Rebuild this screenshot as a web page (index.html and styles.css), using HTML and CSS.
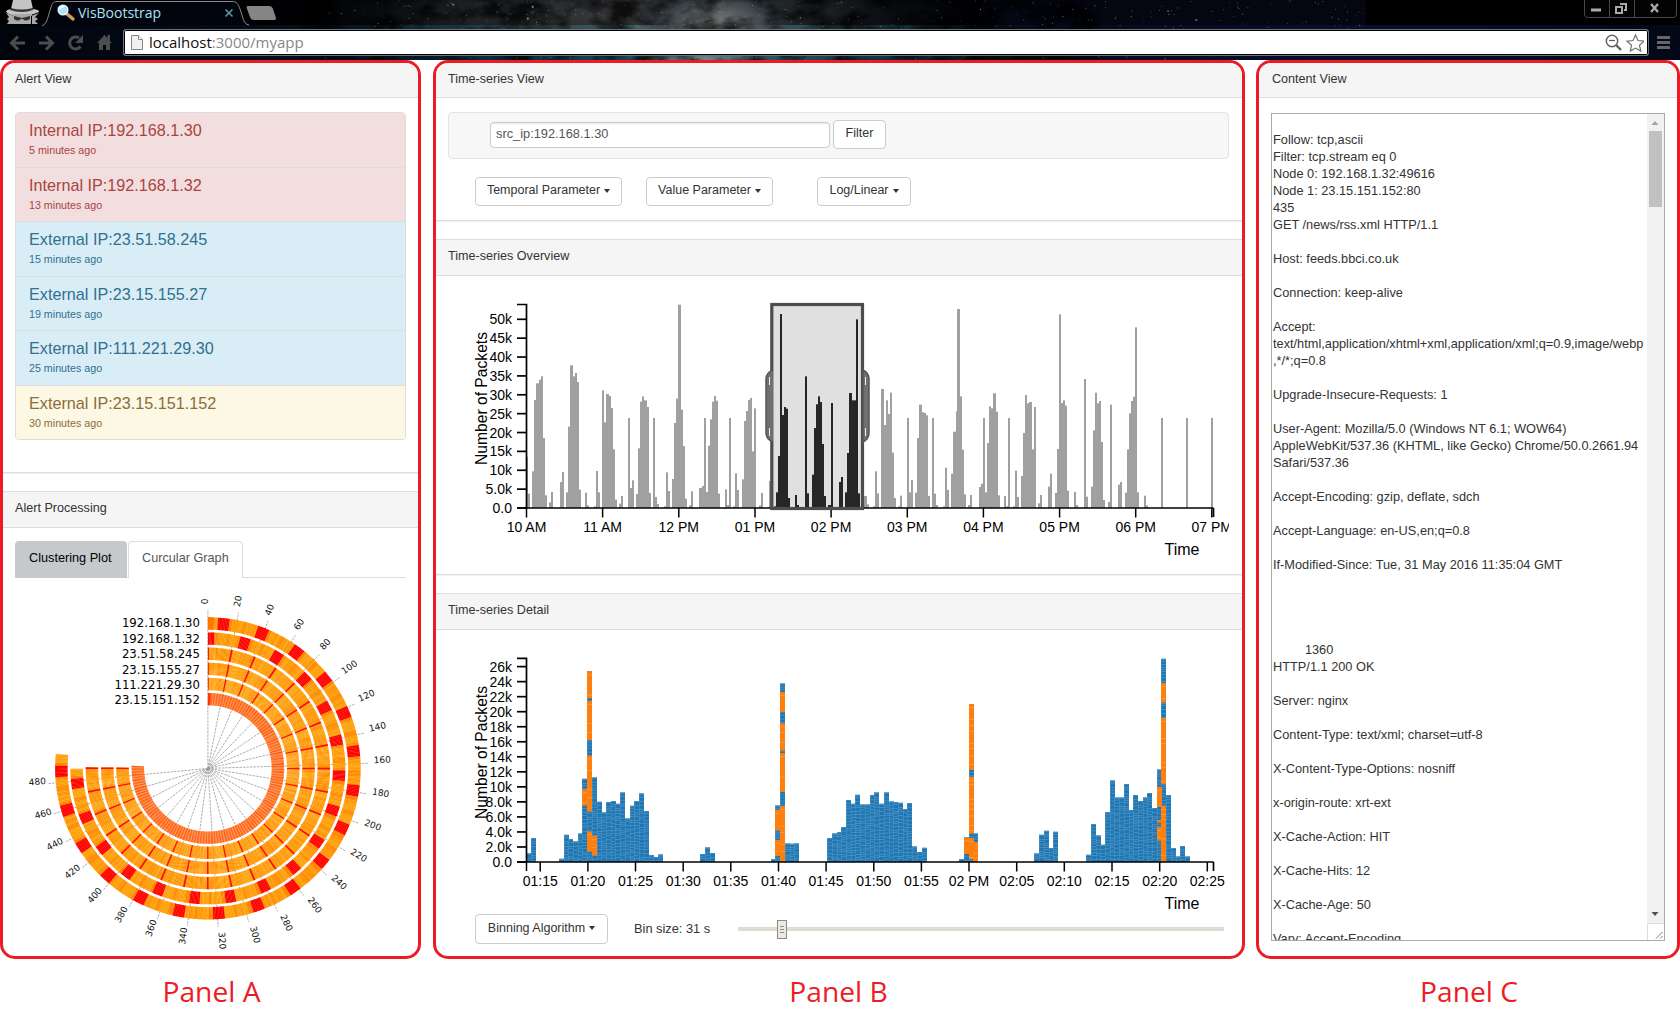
FILE: index.html
```html
<!DOCTYPE html>
<html lang="en">
<head>
<meta charset="utf-8">
<title>VisBootstrap</title>
<link rel="stylesheet" href="styles.css">
</head>
<body>
<header class="chrome">
  <svg class="sky" id="sky" width="1680" height="60" viewBox="0 0 1680 60"></svg>
  <div class="tabstrip">
    <svg class="tabs-art" width="290" height="26" viewBox="0 0 290 26">
      <path d="M42 25.500C47 25 48 16 50.500 9C52 4 52.500 1.500 57 1.500H232C237 1.500 238 4 240 9C243 17 243 24 249 25" fill="#02040d" stroke="#8b8b8b"/>
      <path d="M248 6h21q3 0 4 3l3 9q.5 2-2 2h-20q-3 0-4-3l-3-8q-1-3 1-3z" fill="#858585"/>
      <path d="M13 0h18l2 9q7 1 6 3-9 4-19 4T6 12q0-2 5-3z" fill="#c4c4c4"/>
      <path d="M11 8q10 3 22 0v2q-11 4-23 0z" fill="#333"/>
      <path d="M13 14h19v10H13zM6 13l8 3v8H7l2-3-2-2 2-2zM39 13l-8 3v8h7l-3-3 3-2-3-2z" fill="#a9a9a9"/>
      <path d="M14 16l8 2 8-2v3q-5 3-7 0h-2q-3 3-7 0z" fill="#333"/>
      <path d="M67 14l6 5" stroke="#d59b4e" stroke-width="3.500" stroke-linecap="round"/>
      <circle cx="63" cy="10" r="4.800" fill="#a5e5ff" stroke="#e4f5fb" stroke-width="1.500"/>
      <path d="M60 9q1-3 4-2" stroke="#fff" fill="none" stroke-width="1.500"/>
      <path d="M225.500 9.500l7 7m0-7l-7 7" stroke="#5f97aa" stroke-width="1.600"/>
      <text x="78" y="18" class="tab-title">VisBootstrap</text>
    </svg>
    <svg class="winctl" width="94" height="20" viewBox="0 0 94 20">
      <path d="M.5 0v14q0 3.500 3 3.500h86q3 0 3-3.500V0" fill="#030303" stroke="#484848"/>
      <path d="M25.500 0v17M50.500 0v17" stroke="#484848"/>
      <path d="M7 8.500h10v3H7z" fill="#aaa"/>
      <path d="M36 4h6v6h-2M32 7h6v6h-6z" fill="none" stroke="#aaa" stroke-width="2"/>
      <path d="M67 4l7 8m0-8l-7 8" stroke="#aaa" stroke-width="2.400"/>
    </svg>
  </div>
  <div class="toolbar">
    <svg class="nav" width="114" height="28" viewBox="0 0 114 28">
      <g stroke="#4d4d4d" stroke-width="3" fill="none">
        <path d="M25 14H12M18 7.500L11.500 14l6.500 6.500"/>
        <path d="M39 14h13M46 7.500l6.500 6.500-6.500 6.500"/>
        <path d="M80.500 17.500A6 6 0 1 1 79 9"/>
      </g>
      <path d="M83 6v8h-8zM97 14l7.500-8 3 3V6h2.500v6l2 2h-2v7h-4v-5h-3v5h-4v-7z" fill="#4d4d4d"/>
    </svg>
    <div class="omnibox">
      <svg width="14" height="17" viewBox="0 0 14 17"><path d="M1.500 1.500h7l4 4v10h-11z" fill="#f0f0f0" stroke="#868686"/><path d="M8.500 1.500v4h4" fill="#fff" stroke="#868686"/></svg>
      <span class="url">localhost<span class="dim">:3000/myapp</span></span>
      <svg class="omni-icons" width="42" height="20" viewBox="0 0 42 20">
        <circle cx="10" cy="8" r="5.700" fill="none" stroke="#626262" stroke-width="1.500"/>
        <path d="M7 7.500h6" stroke="#626262" stroke-width="1.300"/><path d="M14 12l5 5" stroke="#626262" stroke-width="2.400"/>
        <path d="M33.500 2l2.500 5.500 6 .7-4.500 4 1.200 5.800-5.200-2.900-5.200 2.900 1.200-5.800-4.500-4 6-.7z" fill="#fff" stroke="#707070" stroke-width="1.200"/>
      </svg>
    </div>
    <svg class="menu" width="16" height="16" viewBox="0 0 16 16"><path d="M1 2.500h13M1 7.500h13M1 12.500h13" stroke="#666" stroke-width="3"/></svg>
  </div>
</header>

<main class="panels">
  <section class="panel">
    <div class="card alerts">
      <h2 class="heading first">Alert View</h2>
      <ul class="alert-list">
        <li class="danger"><b>Internal IP:192.168.1.30</b><small>5 minutes ago</small></li>
        <li class="danger"><b>Internal IP:192.168.1.32</b><small>13 minutes ago</small></li>
        <li class="info"><b>External IP:23.51.58.245</b><small>15 minutes ago</small></li>
        <li class="info"><b>External IP:23.15.155.27</b><small>19 minutes ago</small></li>
        <li class="info"><b>External IP:111.221.29.30</b><small>25 minutes ago</small></li>
        <li class="warning"><b>External IP:23.15.151.152</b><small>30 minutes ago</small></li>
      </ul>
    </div>
    <div class="card last">
      <h2 class="heading">Alert Processing</h2>
      <div class="tabs"><span class="tab on">Clustering Plot</span><span class="tab open">Curcular Graph</span></div>
      <svg id="rings" width="415" height="376" viewBox="3 579 415 376"></svg>
    </div>
  </section>

  <section class="panel">
    <div class="card filter-card">
      <h2 class="heading first">Time-series View</h2>
      <div class="well"><span class="field">src_ip:192.168.1.30</span><span class="btn">Filter</span></div>
      <div class="params">
        <span class="btn w1">Temporal Parameter<i class="caret"></i></span>
        <span class="btn w2">Value Parameter<i class="caret"></i></span>
        <span class="btn w3">Log/Linear<i class="caret"></i></span>
      </div>
    </div>
    <div class="card overview-card">
      <h2 class="heading">Time-series Overview</h2>
      <svg class="chart" id="overview" width="781" height="298" viewBox="448 276 781 298"></svg>
    </div>
    <div class="card last">
      <h2 class="heading">Time-series Detail</h2>
      <svg class="chart" id="detail" width="781" height="284" viewBox="448 630 781 284"></svg>
      <div class="binning">
        <span class="btn w4">Binning Algorithm<i class="caret"></i></span>
        <span class="binsize">Bin size: 31 s</span>
        <span class="slider"><i class="thumb"></i></span>
      </div>
    </div>
  </section>

  <section class="panel">
    <h2 class="heading first content-heading">Content View</h2>
    <div class="textbox">
<pre class="content">

Follow: tcp,ascii
Filter: tcp.stream eq 0
Node 0: 192.168.1.32:49616
Node 1: 23.15.151.152:80
435
GET /news/rss.xml HTTP/1.1

Host: feeds.bbci.co.uk

Connection: keep-alive

Accept:
text/html,application/xhtml+xml,application/xml;q=0.9,image/webp
,*/*;q=0.8

Upgrade-Insecure-Requests: 1

User-Agent: Mozilla/5.0 (Windows NT 6.1; WOW64)
AppleWebKit/537.36 (KHTML, like Gecko) Chrome/50.0.2661.94
Safari/537.36

Accept-Encoding: gzip, deflate, sdch

Accept-Language: en-US,en;q=0.8

If-Modified-Since: Tue, 31 May 2016 11:35:04 GMT




         1360
HTTP/1.1 200 OK

Server: nginx

Content-Type: text/xml; charset=utf-8

X-Content-Type-Options: nosniff

x-origin-route: xrt-ext

X-Cache-Action: HIT

X-Cache-Hits: 12

X-Cache-Age: 50

Vary: Accept-Encoding
</pre>
      <div class="scroll">
        <svg width="17" height="17" viewBox="0 0 17 17"><path d="M4.500 11h7l-3.500-4z" fill="#a3a3a3"/></svg>
        <i class="grip"></i>
        <svg class="down" width="17" height="17" viewBox="0 0 17 17"><path d="M4.500 6h7l-3.500 4z" fill="#505050"/></svg>
        <svg class="resize" width="17" height="17" viewBox="0 0 17 17"><path d="M0 .5h17M.5 0v17" stroke="#dcdcdc"/><path d="M9 15.500l6.500-6.500M13 15.500l2.500-2.500" stroke="#808080"/></svg>
      </div>
    </div>
  </section>
</main>
<footer class="labels"><span>Panel A</span><span>Panel B</span><span>Panel C</span></footer>
<script src="app.js"></script>
</body>
</html>
```
FILE: styles.css
```css
* { box-sizing: border-box; }
body { margin: 0; width: 1680px; height: 1024px; overflow: hidden; background: #fff; color: #333; font: 12.8px/17px "Liberation Sans", Arial, sans-serif; }
svg { display: block; flex: none; }

.chrome { position: relative; height: 60px; background: #000; overflow: hidden; }
.sky { position: absolute; left: 0; top: 0; }
.tabstrip { position: relative; height: 26px; display: flex; justify-content: space-between; padding-right: 2px; }
.tab-title { font: 14px "Open Sans", "Noto Sans", sans-serif; fill: #a9e3f5; }
.toolbar { position: relative; height: 34px; display: flex; padding-top: 3px; }
.nav { margin-right: 9px; }
.omnibox { width: 1526px; height: 27px; border: 1px solid #6d7478; border-radius: 3px; background: #fff; box-shadow: inset 0 0 0 1px #000; display: flex; align-items: center; padding: 0 4px 0 6px; }
.url { margin-left: 5px; font: 15px/22px "Open Sans", "Noto Sans", sans-serif; color: #111; flex: 1; padding-bottom: 1px; }
.dim { color: #878787; }
.menu { margin: 6px 0 0 7px; }

.panels { display: grid; grid-template-columns: 421px 812px 423px; column-gap: 12px; height: 899px; }
.panel { border: 3px solid #ed1c24; border-radius: 15px; overflow: hidden; height: 899px; }
.panel:last-child { margin-left: -1px; }
.card { border-bottom: 1px solid #ddd; margin-bottom: 18px; box-shadow: 0 1px 1px rgba(0,0,0,.05); }
.card.last { border: 0; margin: 0; box-shadow: none; }
.alerts { height: 410px; }
.filter-card { height: 158px; }
.overview-card { height: 336px; margin-bottom: 18px; }
.heading { margin: 0; height: 37px; padding: 8px 12px 0; background: #f5f5f5; border: solid #ddd; border-width: 1px 0; font-size: 12.6px; font-weight: 400; }
.heading.first { height: 35px; border-top: 0; padding-top: 8px; }
.heading.content-heading { padding-left: 13px; }

.alert-list { list-style: none; margin: 14px 12px 0; padding: 0; border: 1px solid #ddd; border-radius: 4px; overflow: hidden; }
.alert-list li { height: 54.5px; padding: 8px 13px 0; border-bottom: 1px solid #ddd; }
.alert-list li:last-child { border: 0; height: 53.500px; }
.alert-list b { display: block; font-weight: 400; font-size: 16.2px; line-height: 18px; }
.alert-list small { display: block; font-size: 10.7px; line-height: 14px; margin-top: 4px; }
.danger { background: #f2dede; color: #a94442; }
.info { background: #d9edf7; color: #31708f; }
.warning { background: #fcf8e3; color: #8a6d3b; }

.tabs { margin: 13px 12px 0; height: 37px; margin-bottom: 1px; border-bottom: 1px solid #ddd; display: flex; gap: 1px; font-size: 12.7px; }
.tab { height: 37px; padding: 9px 14px 0; border-radius: 4px 4px 0 0; }
.tab.on { width: 112px; background: #c5c9cc; color: #000; white-space: nowrap; }
.tab.open { width: 115px; height: 37px; padding: 8px 13px 0; border: 1px solid #ddd; border-bottom: 0; background: #fff; color: #555; white-space: nowrap; }

.btn { height: 29px; border: 1px solid #ccc; border-radius: 4px; background: #fff; display: inline-flex; justify-content: center; align-items: center; padding-bottom: 2px; color: #333; white-space: nowrap; font-size: 12.5px; }
.caret { border: 3px solid transparent; border-top: 4px solid #333; border-bottom: 0; margin-left: 4px; }
.well { margin: 14px 13px 0 12px; height: 47px; border: 1px solid #e3e3e3; border-radius: 4px; background: #f7f7f7; display: flex; padding: 7px 0 0 41px; gap: 3px; }
.well .btn { width: 53px; }
.field { width: 340px; height: 26px; margin-top: 2px; border: 1px solid #ccc; border-radius: 4px; background: #fff; padding: 2px 5px; color: #555; box-shadow: inset 0 1px 1px rgba(0,0,0,.08); }
.params { display: flex; margin: 18px 0 0 39px; }
.w1 { width: 147px; margin-right: 24px; }
.w2 { width: 127px; margin-right: 44px; }
.w3 { width: 94px; }
.w4 { width: 133px; height: 30px; }
.chart { margin-left: 12px; }
.binning { display: flex; margin-left: 39px; align-items: center; }
.binsize { margin-left: 26px; width: 104px; padding-bottom: 1px; }
.slider { width: 486px; height: 4px; background: #e0dcd4; position: relative; }
.thumb { position: absolute; left: 39px; top: -7px; width: 10px; height: 19px; border: 1px solid #8e8982; background: linear-gradient(#928d86,#928d86) 2px 5px/4px 1px no-repeat, linear-gradient(#928d86,#928d86) 2px 8px/4px 1px no-repeat, linear-gradient(#928d86,#928d86) 2px 11px/4px 1px no-repeat, #ece8e2; }

.textbox { margin: 15px 0 0 12px; width: 394px; height: 828px; border: 1px solid #a9a9a9; display: flex; justify-content: space-between; overflow: hidden; }
.content { margin: 0; padding: 0 0 0 1px; font: 12.78px/17px "Liberation Sans", Arial, sans-serif; color: #333; width: 375px; overflow: hidden; }
.scroll { width: 17px; background: #f1f1f1; display: flex; flex-direction: column; align-items: center; flex: none; }
.grip { width: 13px; height: 76px; background: #c1c1c1; }
.down { margin-top: auto; }
.resize { background: #fff; }

.labels { display: grid; grid-template-columns: 423px 831px 1fr; text-align: center; color: #ed1c24; font: 28.2px/34px "Open Sans", "Noto Sans", sans-serif; padding-top: 15px; }
.labels span:nth-child(3) { padding-left: 4px; }

.axis-text { font: 14px "Liberation Sans", Arial, sans-serif; fill: #000; }
.axis-title { font: 16px "Liberation Sans", Arial, sans-serif; fill: #000; }
.ring-name { font: 11.7px "DejaVu Sans", sans-serif; fill: #000; }
.ring-tick { font: 9px "DejaVu Sans", sans-serif; fill: #111; }
```
FILE: app.js
```js
// Deterministic pseudo-random numbers, so the page draws the same each time.
let seed = 7;
const rnd = () => (seed = (seed * 16807) % 2147483647) / 2147483647;
const put = (id, s) => { document.getElementById(id).innerHTML = s; };
const rect = (x, y, w, h, f, extra = '') => `<rect x="${x.toFixed(2)}" y="${y.toFixed(2)}" width="${w.toFixed(2)}" height="${h.toFixed(2)}" fill="${f}" ${extra}/>`;
const text = (x, y, t, c, anchor, extra = '') => `<text x="${x}" y="${y}" class="${c}" text-anchor="${anchor}" ${extra}>${t}</text>`;

// Browser theme: a night sky with a nebula.
(function sky() {
  let s = `<defs><radialGradient id="neb"><stop offset="0" stop-color="#7c7c7c"/><stop offset=".55" stop-color="#465054" stop-opacity=".8"/><stop offset="1" stop-color="#1a2a33" stop-opacity="0"/></radialGradient>
  <filter id="cloud" x="0" y="0" width="100%" height="100%"><feTurbulence type="fractalNoise" baseFrequency=".03 .05" numOctaves="5" seed="4"/><feColorMatrix values="0 0 0 0 0  0 0 0 0 0  0 0 0 0 0  3 0 0 0 -1.150"/></filter>
  <linearGradient id="bar"><stop offset="0" stop-color="#02040d"/><stop offset=".2" stop-color="#03101d"/><stop offset=".3" stop-color="#0c2f42"/><stop offset=".37" stop-color="#164454"/><stop offset=".42" stop-color="#8aa0a2"/><stop offset=".46" stop-color="#2c5662"/><stop offset=".55" stop-color="#0c2430"/><stop offset=".62" stop-color="#04090f"/><stop offset=".8" stop-color="#060e30"/><stop offset="1" stop-color="#020817"/></linearGradient></defs>`;
  s += rect(0, 0, 1680, 60, '#010103') + rect(0, 25, 1680, 35, 'url(#bar)');
  s += '<ellipse cx="640" cy="14" rx="330" ry="60" fill="url(#neb)" opacity=".5"/><ellipse cx="718" cy="22" rx="80" ry="38" fill="url(#neb)"/><ellipse cx="1240" cy="12" rx="260" ry="60" fill="#0b1028" opacity=".4"/>';
  s += '<rect x="300" y="0" width="800" height="60" filter="url(#cloud)" opacity=".75"/>';
  s += rect(1366, 0, 314, 25, '#000');
  for (let i = 0; i < 420; i++) {
    const x = 320 + rnd() * 1046, y = rnd() * 60, big = rnd() > .96;
    s += `<circle cx="${x.toFixed(1)}" cy="${y.toFixed(1)}" r="${big ? 1.1 : .55}" fill="#9cb6be" opacity="${(.2 + rnd() * .5).toFixed(2)}"/>`;
  }
  put('sky', s);
})();

// Chart data is on a grid of thirds of a pixel: position:top, measured from (x0, y0).
const parse = s => s.split(' ').map(p => p.split(':').map(Number));
function axes(y0, y1, labels, step, xt, labelY, titleY) {
  let s = `<path d="M517 ${y1}H526.500V${y0}M517 ${y0}H1213.500M1213.500 ${y0}v9" fill="none" stroke="#000" stroke-width="1.700"/>`;
  labels.forEach((t, i) => {
    const y = y0 - i * step;
    s += `<path d="M517 ${y.toFixed(2)}h9" stroke="#000" stroke-width="1.700"/>` + text(512, (y + 5).toFixed(2), t, 'axis-text', 'end');
  });
  xt.forEach(([x, t]) => { s += `<path d="M${x} ${y0}v9.500" stroke="#000" stroke-width="1.500"/>` + text(x, labelY, t, 'axis-text', 'middle'); });
  return s + text(1199.5, titleY, 'Time', 'axis-title', 'end');
}

(function overview() {
  const light1 = parse('291:530 297:641 310:574 316:360 322:310 329:299 335:289 341:474 348:646 361:667 367:636 393:606 399:576 412:637 418:440 424:256 431:289 437:279 443:306 450:629 469:638 475:676 495:679 501:573 507:637 520:331 526:427 532:342 539:348 545:384 551:508 558:659 570:671 577:648 596:414 602:624 608:601 621:642 628:505 634:365 640:349 646:361 653:381 659:639 672:414 678:651 685:672 704:679 710:577 716:633 729:597 736:429 742:356 748:74 755:389 761:498 767:656 780:676 786:634 811:624 818:618 824:414 830:636 837:497 843:418 850:365 856:348 862:362 868:641 888:628 894:675 900:414 913:679 919:580 925:630 938:598 945:423 951:393 957:360 964:354 970:514 976:385 989:676 995:639 1021:603');
  const dark = parse('1034:679 1040:637 1046:528 1052:102 1059:405 1065:381 1071:386 1078:654 1097:645 1103:675 1128:289 1135:640 1148:584 1154:444 1160:373 1167:349 1173:366 1179:492 1186:648 1198:675 1205:369 1230:606 1236:591 1249:637 1255:519 1261:339 1268:361 1274:361 1281:118 1287:640');
  const light2 = parse('76:648 83:673 102:679 108:574 115:640 127:327 134:435 140:361 146:402 153:338 159:518 165:654 178:679 184:647 204:414 210:637 216:600 229:638 235:474 241:374 248:397 254:399 260:406 267:648 279:414 286:641 292:675 311:679 317:563 324:630 337:581 343:455 350:394 355:87 362:349 368:509 375:643 388:675 394:645 419:621 425:611 432:414 438:637 444:489 451:379 457:385 463:340 470:395 476:646 495:648 501:679 508:414 521:679 527:572 533:651 546:588 552:459 559:345 565:370 571:366 578:508 584:381 597:670 603:645 628:620 634:581 648:639 654:507 660:103 667:369 673:361 679:377 685:632 704:636 711:675 736:297 742:650 755:620 762:451 768:338 774:370 781:363 787:486 793:660 806:666 812:374 838:614 844:606 857:638 863:508 870:400 876:363 883:350 888:142 895:637 914:647 920:676 965:414 1041:414 1117:414');
  // Snap each bar to whole pixels and close the gap to its right-hand neighbour.
  const bars = (d, x0, f) => d.map(([x, y], i) => {
    const left = v => Math.round(x0 + v / 3 - 1.1);
    const L = left(x), next = d[i + 1], N = next ? left(next[0]) : 0;
    return rect(L, 280 + y / 3, N - L === 3 ? 3 : 2, (684 - y) / 3, f);
  }).join('');
  let s = bars(light1, 430, '#a0a0a0') + bars(light2, 840, '#a0a0a0');
  s += rect(771.8, 304.5, 90.7, 204, '#e0e0e0');
  s += bars(dark, 430, '#262626');
  const hours = ['10 AM', '11 AM', '12 PM', '01 PM', '02 PM', '03 PM', '04 PM', '05 PM', '06 PM', '07 PM'];
  s += axes(508, 304.5, ['0.0', '5.0k', '10k', '15k', '20k', '25k', '30k', '35k', '40k', '45k', '50k'], 18.87, hours.map((t, i) => [(526.5 + i * 76.15).toFixed(1), t]), 532, 555);
  s += '<rect x="771.800" y="304.500" width="90.700" height="204" fill="none" stroke="#4d4d4d" stroke-width="3.200"/>';
  s += '<path d="M773 370q-7 3-7 9v54q0 6 7 9M863 370q6 3 6 9v54q0 6-6 9z" fill="#707070" stroke="#555" stroke-width="1.500"/><path d="M769.500 377v8m0 43v8M865.500 377v8m0 43v8" stroke="#eee"/>';
  s += text(0, 0, 'Number of Packets', 'axis-title', 'start', 'transform="translate(487 465) rotate(-90)" textLength="133" lengthAdjust="spacingAndGlyphs"');
  put('overview', s);
})();

(function detail() {
  const plain = parse('288:850 302:804 387:866 401:794 415:807 429:814 443:790 457:626 486:622 500:695 514:727 528:696 542:693 556:701 571:667 585:745 599:707 613:693 627:670 641:723 656:855 670:861 684:853 811:852 825:832 839:849 1023:867 1036:706 1065:820 1079:821 1093:820 1051:340 1192:804 1206:790 1220:786 1234:771 1248:690 1262:701 1276:674 1291:703 1305:703 1319:675 1333:667 1347:701 1361:667 1376:694 1390:696 1404:698 1418:717 1432:699 1447:829 1461:846 1475:833 1587:867 1601:802 1630:790 1616:402 1813:850 1827:794 1841:782 1856:834 1870:785 1968:854 1983:762 1997:796 2011:824 2025:726 2039:631 2053:682 2068:682 2082:642 2096:720 2110:675 2124:693 2138:682 2152:669 2167:714 2180:598 2209:675 2194:266 2223:834 2237:859 2251:828 2265:859 471:304');
  // Orange sections of the bars: position, top, bottom.
  const hot = [[457,658,707],[486,797,857],[471,304,384],[471,392,510],[471,556,725],[471,784,845],[1036,719,781],[1036,810,858],[1051,366,426],[1051,460,542],[1051,549,666],[1051,708,876],[1601,802,852],[1630,816,876],[1616,402,600],[1616,620,790],[1616,804,868],[2180,651,711],[2180,750,758],[2180,771,812],[2194,339,398],[2194,444,643],[2194,708,876]];
  let s = '';
  plain.forEach(([x, y]) => {
    const X = Math.round(430 + x / 3), Y = 570 + y / 3;
    s += rect(X, Y, 5, 862 - Y, '#1f77b4');
    for (let k = Y + .5; k < 861; k += 2 + Math.floor(rnd() * 3)) s += rect(X, k, 5, .6, '#9cc4e0', 'opacity=".5"');
    s += rect(X, Y, .5, 862 - Y, '#8bbadb', 'opacity=".4"');
  });
  hot.forEach(([x, a, b]) => {
    const X = Math.round(430 + x / 3);
    s += rect(X, 570 + a / 3, 5, (b - a) / 3, '#ff7f0e');
    for (let k = a + 10; k < b - 6; k += 12 + rnd() * 50) s += rect(X, 570 + k / 3, 5, .5, '#ffc28c', 'opacity=".7"');
  });
  const names = ['01:15', '01:20', '01:25', '01:30', '01:35', '01:40', '01:45', '01:50', '01:55', '02 PM', '02:05', '02:10', '02:15', '02:20', '02:25'];
  s += axes(862, 658.3, ['0.0', '2.0k', '4.0k', '6.0k', '8.0k', '10k', '12k', '14k', '16k', '18k', '20k', '22k', '24k', '26k'], 15.03, names.map((t, i) => [(540.2 + i * 47.65).toFixed(1), t]), 886, 909);
  s += '<path d="M526.500 862v9" stroke="#000" stroke-width="1.500"/>';
  s += text(0, 0, 'Number of Packets', 'axis-title', 'start', 'transform="translate(487 819) rotate(-90)" textLength="133" lengthAdjust="spacingAndGlyphs"');
  put('detail', s);
})();

(function rings() {
  const cx = 207.9, cy = 768.4, rad = d => d * Math.PI / 180;
  // The dial is very slightly wider than it is tall.
  const pt = (r, a) => `${(cx + r * 1.003 * Math.sin(rad(a))).toFixed(2)} ${(cy - r * .992 * Math.cos(rad(a))).toFixed(2)}`;
  const names = ['192.168.1.30', '192.168.1.32', '23.51.58.245', '23.15.155.27', '111.221.29.30', '23.15.151.152'];
  const ends = [275.5, 269.8, 270.5, 270.5, 270.5, 272];
  const sector = (r0, r1, a, b, f) => `<path d="M${pt(r1, a)}A${r1} ${r1} 0 0 1 ${pt(r1, b)}L${pt(r0, b)}A${r0} ${r0} 0 0 0 ${pt(r0, a)}z" fill="${f}"/>`;
  let s = '';
  for (let v = 0; v <= 480; v += 20) {
    const a = v * .551;
    s += `<path d="M${cx} ${cy}L${pt(160, a)}" stroke="#999" stroke-width=".8" stroke-dasharray="2.500 1"/>`;
    const flip = a > 180;
    s += text(0, 0, v, 'ring-tick', flip ? 'end' : 'start', `transform="translate(${pt(flip ? 162 : 165.5, a)}) rotate(${(flip ? a + 90 : a - 90).toFixed(2)})"`);
  }
  const step = .551;
  names.forEach((n, i) => {
    const r1 = 152.3 - i * 15.25, r0 = r1 - 12.4;
    let k6 = 0;
    for (let a = 0; a < ends[i] - .1; a += step) {
      let f, hot = false;
      if (i < 2) {
        const d = (a + step / 2 - (i ? .3 : 5.8) + 15.47 * 2) % 15.47, near = Math.min(d, 15.47 - d);
        hot = near < 2.2;
        f = hot ? '#ff0500' : ['#ffa30d', '#ffa30d', '#ff9d08', '#ff9005'][Math.floor(rnd() * 4)];
        if (!hot && d > 2 && d < 3.6) f = '#ff8400';
        if (!hot && d > 8 && d < 9.3) f = '#ff8a00';
      } else if (i < 5) {
        const k = a % 11.25;
        f = k > 5.5 ? '#ff9a05' : '#ffa40e';
        if (rnd() > .75) f = '#ff8c05';
      } else f = k6++ % 4 < 2 ? '#ff4a10' : '#ff8722';
      const b = Math.min(a + step + .12, ends[i]);
      s += sector(r0, r1, a, b, f);
      if (!hot && i < 5) s += `<path d="M${pt(r0, b)}L${pt(r1, b)}" stroke="#ffc164" stroke-width=".35" opacity=".5"/>`;
    }
    if (i > 1 && i < 5) for (let a = 0; a < 271; a += 11.25) s += sector(r0, r1, a - (a ? .35 : 0), a + .5, '#ff0f00');
    if (i === 5) s += sector(r0, r1, 0, 2, '#ff3500');
    if (i === 0) s += sector(r0, r1, 0, 2.3, '#ff7600');
    s += text(200, 627.3 + i * 15.4, n, 'ring-name', 'end');
  });
  put('rings', s);
})();
```
